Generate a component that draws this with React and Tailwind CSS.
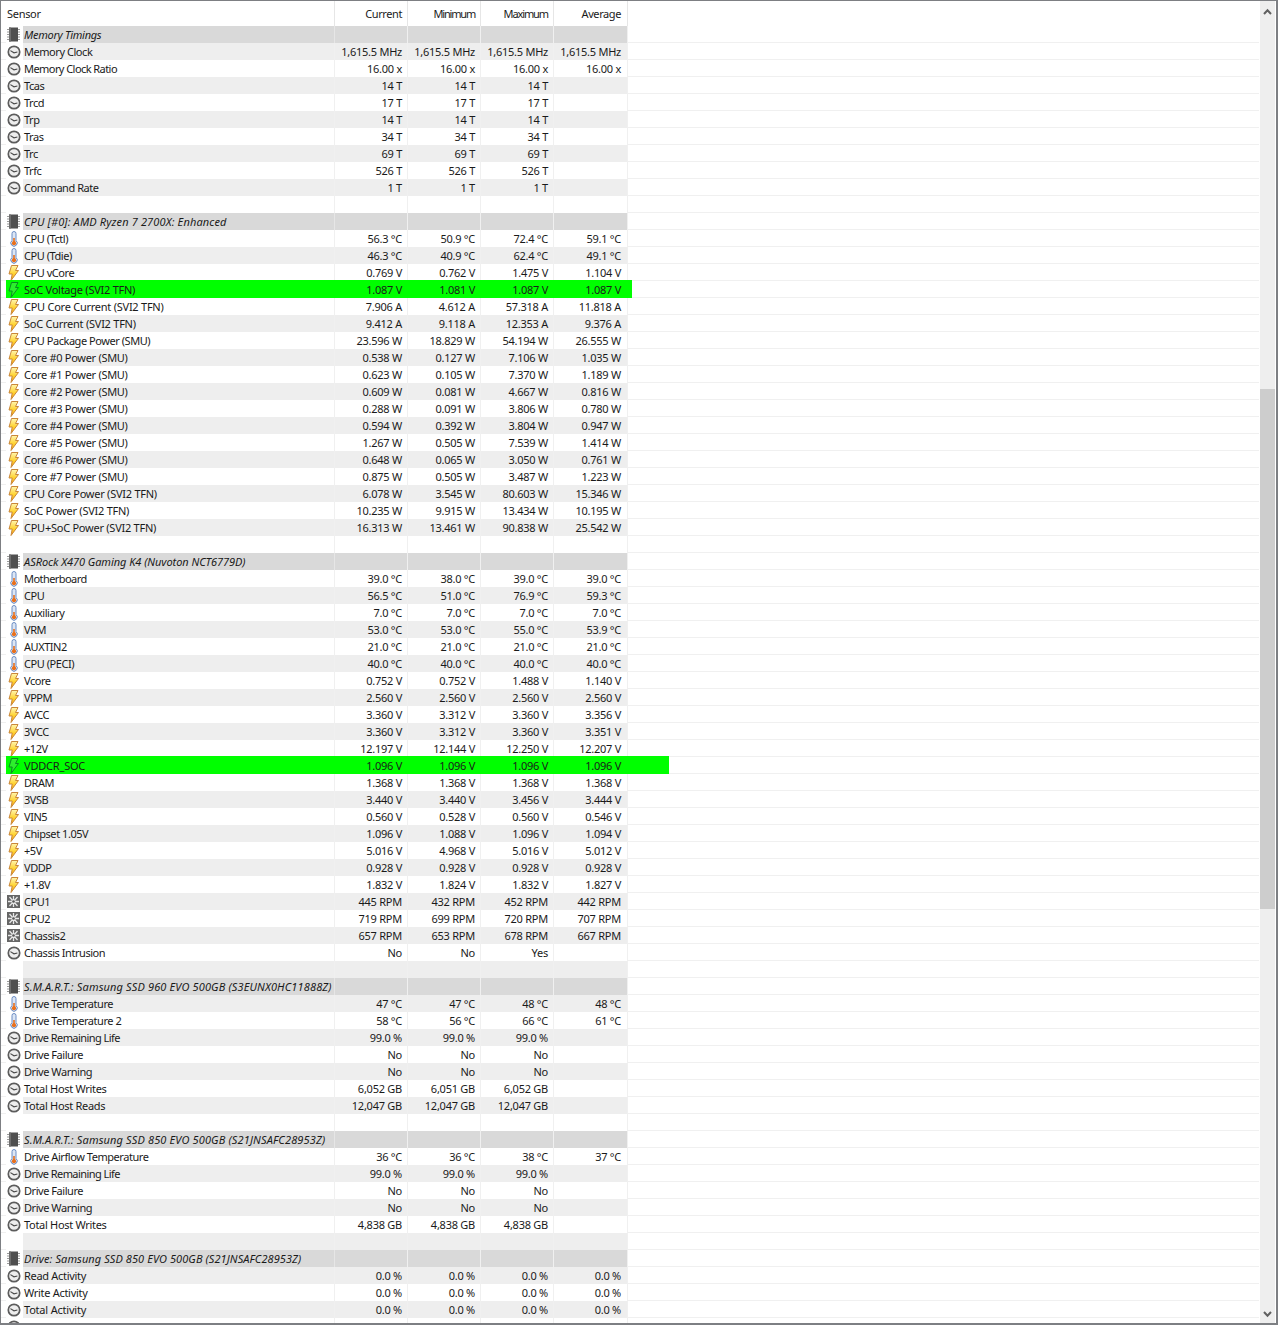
import React from "react";

const FONT = "font-['Noto_Sans','Open_Sans',sans-serif]";

// one entry per row, top to bottom: [type, label, current, minimum, maximum, average, green]
const rows = [
  ["chip", "Memory Timings"],
  ["clock", "Memory Clock", "1,615.5 MHz", "1,615.5 MHz", "1,615.5 MHz", "1,615.5 MHz"],
  ["clock", "Memory Clock Ratio", "16.00 x", "16.00 x", "16.00 x", "16.00 x"],
  ["clock", "Tcas", "14 T", "14 T", "14 T", ""],
  ["clock", "Trcd", "17 T", "17 T", "17 T", ""],
  ["clock", "Trp", "14 T", "14 T", "14 T", ""],
  ["clock", "Tras", "34 T", "34 T", "34 T", ""],
  ["clock", "Trc", "69 T", "69 T", "69 T", ""],
  ["clock", "Trfc", "526 T", "526 T", "526 T", ""],
  ["clock", "Command Rate", "1 T", "1 T", "1 T", ""],
  [],
  ["chip", "CPU [#0]: AMD Ryzen 7 2700X: Enhanced"],
  ["temp", "CPU (Tctl)", "56.3 °C", "50.9 °C", "72.4 °C", "59.1 °C"],
  ["temp", "CPU (Tdie)", "46.3 °C", "40.9 °C", "62.4 °C", "49.1 °C"],
  ["bolt", "CPU vCore", "0.769 V", "0.762 V", "1.475 V", "1.104 V"],
  ["bolt", "SoC Voltage (SVI2 TFN)", "1.087 V", "1.081 V", "1.087 V", "1.087 V", "short"],
  ["bolt", "CPU Core Current (SVI2 TFN)", "7.906 A", "4.612 A", "57.318 A", "11.818 A"],
  ["bolt", "SoC Current (SVI2 TFN)", "9.412 A", "9.118 A", "12.353 A", "9.376 A"],
  ["bolt", "CPU Package Power (SMU)", "23.596 W", "18.829 W", "54.194 W", "26.555 W"],
  ["bolt", "Core #0 Power (SMU)", "0.538 W", "0.127 W", "7.106 W", "1.035 W"],
  ["bolt", "Core #1 Power (SMU)", "0.623 W", "0.105 W", "7.370 W", "1.189 W"],
  ["bolt", "Core #2 Power (SMU)", "0.609 W", "0.081 W", "4.667 W", "0.816 W"],
  ["bolt", "Core #3 Power (SMU)", "0.288 W", "0.091 W", "3.806 W", "0.780 W"],
  ["bolt", "Core #4 Power (SMU)", "0.594 W", "0.392 W", "3.804 W", "0.947 W"],
  ["bolt", "Core #5 Power (SMU)", "1.267 W", "0.505 W", "7.539 W", "1.414 W"],
  ["bolt", "Core #6 Power (SMU)", "0.648 W", "0.065 W", "3.050 W", "0.761 W"],
  ["bolt", "Core #7 Power (SMU)", "0.875 W", "0.505 W", "3.487 W", "1.223 W"],
  ["bolt", "CPU Core Power (SVI2 TFN)", "6.078 W", "3.545 W", "80.603 W", "15.346 W"],
  ["bolt", "SoC Power (SVI2 TFN)", "10.235 W", "9.915 W", "13.434 W", "10.195 W"],
  ["bolt", "CPU+SoC Power (SVI2 TFN)", "16.313 W", "13.461 W", "90.838 W", "25.542 W"],
  [],
  ["chip", "ASRock X470 Gaming K4 (Nuvoton NCT6779D)"],
  ["temp", "Motherboard", "39.0 °C", "38.0 °C", "39.0 °C", "39.0 °C"],
  ["temp", "CPU", "56.5 °C", "51.0 °C", "76.9 °C", "59.3 °C"],
  ["temp", "Auxiliary", "7.0 °C", "7.0 °C", "7.0 °C", "7.0 °C"],
  ["temp", "VRM", "53.0 °C", "53.0 °C", "55.0 °C", "53.9 °C"],
  ["temp", "AUXTIN2", "21.0 °C", "21.0 °C", "21.0 °C", "21.0 °C"],
  ["temp", "CPU (PECI)", "40.0 °C", "40.0 °C", "40.0 °C", "40.0 °C"],
  ["bolt", "Vcore", "0.752 V", "0.752 V", "1.488 V", "1.140 V"],
  ["bolt", "VPPM", "2.560 V", "2.560 V", "2.560 V", "2.560 V"],
  ["bolt", "AVCC", "3.360 V", "3.312 V", "3.360 V", "3.356 V"],
  ["bolt", "3VCC", "3.360 V", "3.312 V", "3.360 V", "3.351 V"],
  ["bolt", "+12V", "12.197 V", "12.144 V", "12.250 V", "12.207 V"],
  ["bolt", "VDDCR_SOC", "1.096 V", "1.096 V", "1.096 V", "1.096 V", "long"],
  ["bolt", "DRAM", "1.368 V", "1.368 V", "1.368 V", "1.368 V"],
  ["bolt", "3VSB", "3.440 V", "3.440 V", "3.456 V", "3.444 V"],
  ["bolt", "VIN5", "0.560 V", "0.528 V", "0.560 V", "0.546 V"],
  ["bolt", "Chipset 1.05V", "1.096 V", "1.088 V", "1.096 V", "1.094 V"],
  ["bolt", "+5V", "5.016 V", "4.968 V", "5.016 V", "5.012 V"],
  ["bolt", "VDDP", "0.928 V", "0.928 V", "0.928 V", "0.928 V"],
  ["bolt", "+1.8V", "1.832 V", "1.824 V", "1.832 V", "1.827 V"],
  ["fan", "CPU1", "445 RPM", "432 RPM", "452 RPM", "442 RPM"],
  ["fan", "CPU2", "719 RPM", "699 RPM", "720 RPM", "707 RPM"],
  ["fan", "Chassis2", "657 RPM", "653 RPM", "678 RPM", "667 RPM"],
  ["clock", "Chassis Intrusion", "No", "No", "Yes", ""],
  [],
  ["chip", "S.M.A.R.T.: Samsung SSD 960 EVO 500GB (S3EUNX0HC11888Z)"],
  ["temp", "Drive Temperature", "47 °C", "47 °C", "48 °C", "48 °C"],
  ["temp", "Drive Temperature 2", "58 °C", "56 °C", "66 °C", "61 °C"],
  ["clock", "Drive Remaining Life", "99.0 %", "99.0 %", "99.0 %", ""],
  ["clock", "Drive Failure", "No", "No", "No", ""],
  ["clock", "Drive Warning", "No", "No", "No", ""],
  ["clock", "Total Host Writes", "6,052 GB", "6,051 GB", "6,052 GB", ""],
  ["clock", "Total Host Reads", "12,047 GB", "12,047 GB", "12,047 GB", ""],
  [],
  ["chip", "S.M.A.R.T.: Samsung SSD 850 EVO 500GB (S21JNSAFC28953Z)"],
  ["temp", "Drive Airflow Temperature", "36 °C", "36 °C", "38 °C", "37 °C"],
  ["clock", "Drive Remaining Life", "99.0 %", "99.0 %", "99.0 %", ""],
  ["clock", "Drive Failure", "No", "No", "No", ""],
  ["clock", "Drive Warning", "No", "No", "No", ""],
  ["clock", "Total Host Writes", "4,838 GB", "4,838 GB", "4,838 GB", ""],
  [],
  ["chip", "Drive: Samsung SSD 850 EVO 500GB (S21JNSAFC28953Z)"],
  ["clock", "Read Activity", "0.0 %", "0.0 %", "0.0 %", "0.0 %"],
  ["clock", "Write Activity", "0.0 %", "0.0 %", "0.0 %", "0.0 %"],
  ["clock", "Total Activity", "0.0 %", "0.0 %", "0.0 %", "0.0 %"],
  ["clock", "Read Rate", "0.000 MB/s", "0.000 MB/s", "0.000 MB/s", "0.000 MB/s"],
];

const Icon = ({ type }) => {
  if (type === "clock") {
    return (
      <svg width="14" height="14" viewBox="0 0 14 14">
        <circle cx="7" cy="7" r="5.7" fill="#eeeeee" stroke="#5c5c5c" strokeWidth="1.7" />
        <path d="M3.4 5.6L7 7.8L10.4 7" stroke="#4a4a4a" strokeWidth="1.1" fill="none" />
      </svg>
    );
  }
  if (type === "temp") {
    return (
      <svg width="10" height="16" viewBox="0 0 10 16">
        <path d="M3 2.5a2 2 0 0 1 4 0V9.5a3.2 3.2 0 1 1-4 0Z" fill="#dce6f5" stroke="#6b8cc4" />
        <path d="M5 7V11" stroke="#e8701c" strokeWidth="1.6" />
        <circle cx="5" cy="12.2" r="2.1" fill="#e8701c" />
      </svg>
    );
  }
  if (type === "bolt") {
    return (
      <svg width="11" height="16" viewBox="0 0 11 16">
        <defs>
          <linearGradient id="boltFill" x1="0" y1="0" x2="0" y2="1">
            <stop offset="0" stopColor="#fff6b0" />
            <stop offset="0.55" stopColor="#ffd22e" />
            <stop offset="1" stopColor="#f59a1a" />
          </linearGradient>
        </defs>
        <path d="M3.5 0.5H10L7.5 5.5H10.5L3 15.5L4.2 9H1Z" fill="url(#boltFill)" stroke="#c9873a" strokeWidth="1" />
      </svg>
    );
  }
  if (type === "boltGreen") {
    return (
      <svg width="11" height="16" viewBox="0 0 11 16">
        <path d="M3.5 0.5H10L7.5 5.5H10.5L3 15.5L4.2 9H1Z" fill="#2cf02c" stroke="#0b8a24" strokeWidth="1" />
      </svg>
    );
  }
  if (type === "fan") {
    return (
      <svg width="13" height="13" viewBox="0 0 13 13">
        <rect width="13" height="13" fill="#666666" />
        <path d="M6.5 6.5L2.5 2M6.5 6.5L10.5 2M6.5 6.5L2.5 11M6.5 6.5L10.5 11M6.5 6.5H1M6.5 6.5H12M6.5 6.5V1M6.5 6.5V12" stroke="#e8e8e8" strokeWidth="1.3" />
        <circle cx="6.5" cy="6.5" r="1.3" fill="#555555" />
      </svg>
    );
  }
  if (type === "chip") {
    return (
      <svg width="13" height="15" viewBox="0 0 13 15">
        <path d="M0 2.5H13M0 5H13M0 7.5H13M0 10H13M0 12.5H13" stroke="#9a9a9a" />
        <rect x="2" y="0.5" width="9" height="14" fill="#4f4f4f" />
        <rect x="2" y="0.5" width="2" height="14" fill="#6e6e6e" />
      </svg>
    );
  }
  return null;
};

const Cell = ({ children, green, last }) => (
  <div
    className={`h-full shrink-0 border-r text-right whitespace-nowrap tracking-[-0.25px] ${last ? "w-[74px] pr-[6px]" : "w-[73px] pr-[5px]"} ${
      green ? "border-[#00ff00]" : "border-[#f0f0f0]"
    }`}
  >
    {children}
  </div>
);

const HeaderCell = ({ children, track, last }) => (
  <div className={`h-full shrink-0 border-r border-[#e6e6e6] text-right ${last ? "w-[74px] pr-[6px]" : "w-[73px] pr-[5px]"} ${track}`}>{children}</div>
);

const titleTrack = (label) => {
  if (label === "Memory Timings") return "tracking-[-0.28px]";
  if (label.startsWith("ASRock")) return "tracking-[-0.05px]";
  if (label.startsWith("Drive:")) return "tracking-[0.08px]";
  return "tracking-[0.14px]";
};

// same thing for the sensor names
const labelTrack = (label) => {
  if (label.includes("(SVI2")) return "tracking-[-0.25px]";
  if (label.startsWith("Core #")) return "tracking-[-0.3px]";
  if (label === "VDDCR_SOC" || label === "Total Activity") return "tracking-[-0.2px]";
  if (label.startsWith("Total Host") || label === "Read Activity" || label === "Write Activity") return "tracking-[-0.3px]";
  if (label === "Memory Clock Ratio" || label === "Drive Remaining Life" || label === "Motherboard") return "tracking-[-0.56px]";
  return "tracking-[-0.45px]";
};

const Row = ({ row, index }) => {
  const [type, label, cur, min, max, avg, green] = row;
  const isHeader = type === "chip";
  const odd = index % 2 === 1;
  let bg = odd ? "bg-[#eeeeee]" : "bg-white";
  if (isHeader) bg = "bg-[#d9d9d9]";
  if (green) bg = "bg-[#00ff00]";
  let extra = null;
  if (green === "short") extra = <div className="w-[4px] h-[18px] -mt-px bg-[#00ff00]" />;
  if (green === "long") extra = <div className="w-[41px] h-[18px] -mt-px bg-[#00ff00]" />;

  return (
    <div className="flex h-[17px] border-b border-[#f0f0f0]">
      <div className="w-[5px] shrink-0 bg-white" />
      <div className={`flex w-[622px] shrink-0 leading-[17px] ${green ? "h-[18px] -mt-px pt-px" : "h-[17px]"} ${bg}`}>
        <div className={`w-[17px] h-[17px] shrink-0 flex items-center justify-center pr-[2px] ${green ? "bg-[#00ff00]" : "bg-white"}`}>
          {type && <Icon type={green ? "boltGreen" : type} />}
        </div>
        <div
          className={`w-[312px] h-full shrink-0 pl-px whitespace-nowrap overflow-hidden border-r ${
            isHeader
              ? `italic border-[#e6e6e6] ${titleTrack(label)}`
              : `${label ? labelTrack(label) : ""} ${green ? "border-[#00ff00]" : "border-[#f0f0f0]"}`
          }`}
        >
          {label}
        </div>
        <Cell green={green}>{cur}</Cell>
        <Cell green={green}>{min}</Cell>
        <Cell green={green}>{max}</Cell>
        <Cell green={green} last>{avg}</Cell>
      </div>
      {extra}
    </div>
  );
};

const ScrollBar = () => (
  <div className="w-[17px] shrink-0 bg-[#eeeeee] flex flex-col border-x border-white">
    <div className="h-[20px] flex items-center justify-center">
      <svg width="9" height="7" viewBox="0 0 9 7">
        <path d="M1 6L4.5 2.2L8 6" stroke="#606060" strokeWidth="2" fill="none" />
      </svg>
    </div>
    <div className="flex-1 flex flex-col">
      <div className="h-[368px]" />
      <div className="h-[520px] bg-[#cdcdcd]" />
    </div>
    <div className="h-[17px] flex items-center justify-center">
      <svg width="9" height="7" viewBox="0 0 9 7">
        <path d="M1 1L4.5 4.8L8 1" stroke="#606060" strokeWidth="2" fill="none" />
      </svg>
    </div>
  </div>
);

const App = () => {
  return (
    <div className={`${FONT} w-[1278px] h-[1325px] overflow-hidden border-t border-l border-r-2 border-b-2 border-[#7d7f83] bg-white text-[11px] text-[#1a1a1a] flex`}>
      <div className="flex-1 min-w-0 overflow-hidden flex flex-col">
        <div className="flex h-[25px] shrink-0 w-[627px] leading-[26px]">
          <div className="w-[334px] h-full shrink-0 pl-[6px] border-r border-[#e6e6e6] tracking-[-0.3px]">Sensor</div>
          <HeaderCell track="tracking-[-0.4px]">Current</HeaderCell>
          <HeaderCell track="tracking-[-1.2px]">Minimum</HeaderCell>
          <HeaderCell track="tracking-[-1.1px]">Maximum</HeaderCell>
          <HeaderCell track="tracking-[-0.4px]" last>Average</HeaderCell>
        </div>
        {rows.map((r, i) => (
          <Row key={i} row={r} index={i} />
        ))}
      </div>
      <ScrollBar />
    </div>
  );
};

export default App;
